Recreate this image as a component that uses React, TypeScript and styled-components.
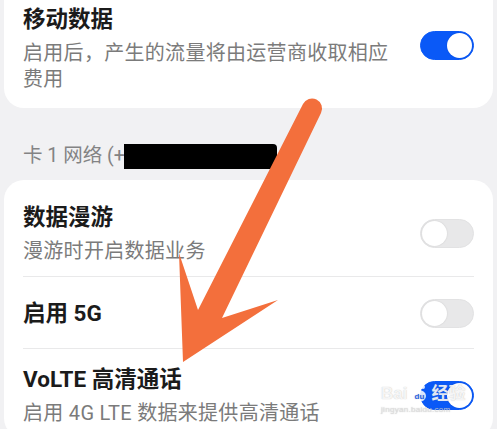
import styled, { createGlobalStyle } from 'styled-components';

const GlobalStyle = createGlobalStyle`
  html, body {
    margin: 0;
    padding: 0;
    background: #f1f1f3;
    overflow: hidden;
  }
  body {
    font-family: Roboto, "Noto Sans CJK SC", sans-serif;
  }
`;

const Page = styled.div`
  position: relative;
  width: 497px;
  height: 429px;
  overflow: hidden;
  padding: 0 4px;
  box-sizing: border-box;
`;

const Card = styled.div<{ $top?: boolean }>`
  background: #ffffff;
  border-radius: 20px;
  padding: ${p => (p.$top ? '24px 19px 16px' : '7px 19px 0')};
  margin-top: ${p => (p.$top ? '-20px' : '0')};
`;

const Row = styled.div<{ $divider?: boolean; $single?: boolean }>`
  display: flex;
  align-items: center;
  justify-content: space-between;
  gap: 16px;
  padding: ${p => (p.$single ? '21px 0 20px' : '15px 0 12px')};
  border-top: ${p => (p.$divider ? '1px solid #e9e9ea' : 'none')};
`;

const Texts = styled.div`
  display: flex;
  flex-direction: column;
  max-width: 376px;
`;

const Title = styled.div`
  font-size: 22.5px;
  line-height: 30px;
  font-weight: 700;
  color: #1b1b1b;
`;

const Sub = styled.div`
  margin-top: 6px;
  font-size: 20px;
  letter-spacing: 0.3px;
  line-height: 26px;
  color: #7b7b7b;
`;

const Toggle = styled.div<{ $on?: boolean }>`
  flex: none;
  width: 54px;
  height: 29px;
  border-radius: 15px;
  box-sizing: border-box;
  background: ${p => (p.$on ? '#0a59f7' : '#e8e8e9')};
  border: 1px solid ${p => (p.$on ? '#0a59f7' : '#e2e2e3')};
  display: flex;
  align-items: center;
  justify-content: ${p => (p.$on ? 'flex-end' : 'flex-start')};
  padding: 0 1px;
`;

const TopRow = styled(Row)`
  padding: 0;
  & > ${Toggle} {
    margin-bottom: 6px;
  }
`;

const Knob = styled.div`
  width: 25px;
  height: 25px;
  border-radius: 50%;
  background: #ffffff;
  box-shadow: 0 0 2px rgba(0, 0, 0, 0.12);
`;

const Section = styled.div`
  padding: 36px 19px 12px;
  font-size: 19.5px;
  line-height: 24px;
  height: 24px;
  color: #838384;
  display: flex;
  align-items: center;
  white-space: nowrap;
`;

const Redact = styled.span`
  display: inline-block;
  width: 153px;
  height: 25px;
  background: #000;
  border-radius: 0 4px 4px 0;
  margin-left: -1px;
`;

const Arrow = styled.svg`
  position: absolute;
  left: 0;
  top: 0;
  pointer-events: none;
`;

const Watermark = styled.div`
  position: absolute;
  left: 381px;
  top: 383px;
  color: rgba(255, 255, 255, 0.85);
  text-shadow: 0 0 1px rgba(120, 120, 120, 0.5);
  pointer-events: none;
  line-height: 1;
`;

const WmMain = styled.div`
  display: flex;
  align-items: center;
  font-family: "Liberation Sans", "Noto Sans CJK SC", sans-serif;
  font-size: 17px;
  font-weight: 700;
  gap: 2px;
`;

const WmSmall = styled.div`
  margin-top: 3px;
  font-family: "Liberation Sans", sans-serif;
  font-size: 8px;
  color: rgba(230, 230, 230, 0.7);
  letter-spacing: 0.3px;
`;

function Switch({ on }: { on?: boolean }) {
  return (
    <Toggle $on={on}>
      <Knob />
    </Toggle>
  );
}

export default function App() {
  return (
    <Page>
      <GlobalStyle />
      <Card $top>
        <TopRow>
          <Texts>
            <Title>移动数据</Title>
            <Sub>启用后，产生的流量将由运营商收取相应费用</Sub>
          </Texts>
          <Switch on />
        </TopRow>
      </Card>

      <Section>
        卡 1 网络 (+<Redact />
      </Section>

      <Card>
        <Row>
          <Texts>
            <Title>数据漫游</Title>
            <Sub>漫游时开启数据业务</Sub>
          </Texts>
          <Switch />
        </Row>
        <Row $divider $single>
          <Title>启用 5G</Title>
          <Switch />
        </Row>
        <Row $divider>
          <Texts>
            <Title>VoLTE 高清通话</Title>
            <Sub>启用 4G LTE 数据来提供高清通话</Sub>
          </Texts>
          <Switch on />
        </Row>
      </Card>

      <Arrow width="497" height="429" viewBox="0 0 497 429">
        <path
          d="M303,104 L198,310 L179,253 L183,362 L278,300 L222,318 L321,113 A10,10 0 0 0 303,104 Z"
          fill="#f36f3c"
        />
      </Arrow>

      <Watermark>
        <WmMain>
          <span>Bai</span>
          <svg width="20" height="20" viewBox="0 0 20 20">
            <circle cx="4" cy="5" r="2" fill="rgba(255,255,255,0.85)" />
            <circle cx="9" cy="2.5" r="2" fill="rgba(255,255,255,0.85)" />
            <circle cx="14" cy="4" r="2" fill="rgba(255,255,255,0.85)" />
            <ellipse cx="10" cy="13" rx="7" ry="6" fill="rgba(255,255,255,0.85)" />
            <text x="5.5" y="16" fontSize="8" fontWeight="700" fill="#2a66e8" fontFamily="Liberation Sans, sans-serif">du</text>
          </svg>
          <span>经验</span>
        </WmMain>
        <WmSmall>jingyan.baidu.com</WmSmall>
      </Watermark>
    </Page>
  );
}
